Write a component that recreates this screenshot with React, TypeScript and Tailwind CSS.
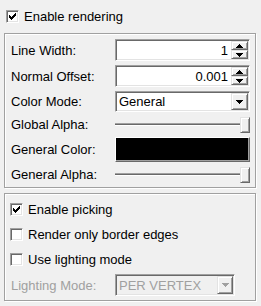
import React from "react";

const sunken =
  "border border-t-[#a0a0a0] border-l-[#a0a0a0] border-b-white border-r-white shadow-[inset_1px_1px_0_#696969,inset_-1px_-1px_0_#e3e3e3]";
const raised =
  "border border-t-[#e3e3e3] border-l-[#e3e3e3] border-b-[#696969] border-r-[#696969] shadow-[inset_1px_1px_0_#ffffff,inset_-1px_-1px_0_#a0a0a0] bg-[#f0f0f0]";

function CheckMark() {
  const tops = [2, 3, 4, 3, 2, 1, 0];
  return (
    <svg width="9" height="9" viewBox="0 0 9 9" shapeRendering="crispEdges">
      {tops.map((t, i) => (
        <rect key={i} x={1 + i} y={1 + t} width="1" height="3" fill="#000" />
      ))}
    </svg>
  );
}

function Check({ checked }: { checked?: boolean }) {
  return (
    <div
      className={`w-[13px] h-[13px] shrink-0 bg-white flex items-center justify-center ${sunken}`}
    >
      {checked ? <CheckMark /> : null}
    </div>
  );
}

function Arrow({ up, color = "#000" }: { up?: boolean; color?: string }) {
  const rows = up ? [3, 2, 1, 0] : [0, 1, 2, 3];
  return (
    <svg width="7" height="4" viewBox="0 0 7 4" shapeRendering="crispEdges">
      {rows.map((inset, r) => (
        <rect key={r} x={inset} y={r} width={7 - 2 * inset} height="1" fill={color} />
      ))}
    </svg>
  );
}

function Spin({ value }: { value: string }) {
  return (
    <div className={`w-[135px] h-[22px] bg-white flex items-stretch p-[1px] ${sunken}`}>
      <div className="flex-1 flex items-center justify-end pr-[3px]">{value}</div>
      <div className="w-[17px] flex flex-col">
        <div className={`h-[9px] flex items-center justify-center ${raised}`}>
          <Arrow up />
        </div>
        <div className={`h-[9px] flex items-center justify-center ${raised}`}>
          <Arrow />
        </div>
      </div>
    </div>
  );
}

function Combo({
  value,
  disabled,
  width,
  height,
}: {
  value: string;
  disabled?: boolean;
  width: string;
  height: string;
}) {
  return (
    <div
      className={`${width} ${height} flex items-stretch p-[1px] ${sunken} ${
        disabled ? "bg-[#f0f0f0] text-[#a0a0a0]" : "bg-white"
      }`}
    >
      <div className="flex-1 flex items-center pl-[2px]">{value}</div>
      <div className={`${disabled ? "w-[16px]" : "w-[17px]"} flex items-center justify-center ${raised}`}>
        <Arrow color={disabled ? "#a0a0a0" : "#000"} />
      </div>
    </div>
  );
}

function Slider() {
  return (
    <div className="w-[135px] h-[17px] flex items-center">
      <div className="flex-1 h-[3px] border-t border-t-[#a0a0a0] border-b border-b-white bg-[#696969]" />
      <div className={`w-[10px] h-[16px] ${raised}`} />
    </div>
  );
}

function Row({ label, h, children }: { label: string; h: string; children: React.ReactNode }) {
  return (
    <div className={`flex items-center ${h}`}>
      <div className="w-[104px] whitespace-nowrap">{label}</div>
      {children}
    </div>
  );
}

export default function App() {
  return (
    <div className="w-[261px] h-[306px] bg-[#f0f0f0] text-[13px] leading-none text-black flex flex-col pl-[4px] pt-[10px] font-['Liberation_Sans',Arial,sans-serif] overflow-hidden">
      <div className="flex items-center h-[13px] ml-[2px] gap-[5px]">
        <Check checked />
        <span>Enable rendering</span>
      </div>

      <div className="mt-[10px] w-[252px] border border-[#a0a0a0] shadow-[inset_1px_1px_0_#ffffff,1px_1px_0_#ffffff] pt-[5px] pb-[4px] pl-[6px] pr-[5px] flex flex-col gap-[4px]">
        <Row label="Line Width:" h="h-[22px]">
          <Spin value="1" />
        </Row>
        <Row label="Normal Offset:" h="h-[22px]">
          <Spin value="0.001" />
        </Row>
        <Row label="Color Mode:" h="h-[21px]">
          <Combo value="General" width="w-[135px]" height="h-[21px]" />
        </Row>
        <Row label="Global Alpha:" h="h-[17px]">
          <Slider />
        </Row>
        <Row label="General Color:" h="h-[25px]">
          <div className="w-[135px] h-[25px] bg-black border border-t-white border-l-white border-b-[#696969] border-r-[#696969] shadow-[inset_-1px_-1px_0_#a0a0a0]" />
        </Row>
        <Row label="General Alpha:" h="h-[17px]">
          <Slider />
        </Row>
      </div>

      <div className="mt-[5px] w-[252px] border border-[#a0a0a0] shadow-[inset_1px_1px_0_#ffffff,1px_1px_0_#ffffff] pt-[9px] pb-[4px] pl-[5px] flex flex-col">
        <div className="flex flex-col gap-[12px]">
          <div className="flex items-center h-[13px] gap-[5px]">
            <Check checked />
            <span>Enable picking</span>
          </div>
          <div className="flex items-center h-[13px] gap-[5px]">
            <Check />
            <span>Render only border edges</span>
          </div>
          <div className="flex items-center h-[13px] gap-[5px]">
            <Check />
            <span>Use lighting mode</span>
          </div>
        </div>
        <div className="mt-[8px] flex items-center h-[22px]">
          <div className="w-[105px] pl-[1px] text-[#a0a0a0] whitespace-nowrap">Lighting Mode:</div>
          <Combo value="PER VERTEX" disabled width="w-[120px]" height="h-[22px]" />
        </div>
      </div>
    </div>
  );
}
